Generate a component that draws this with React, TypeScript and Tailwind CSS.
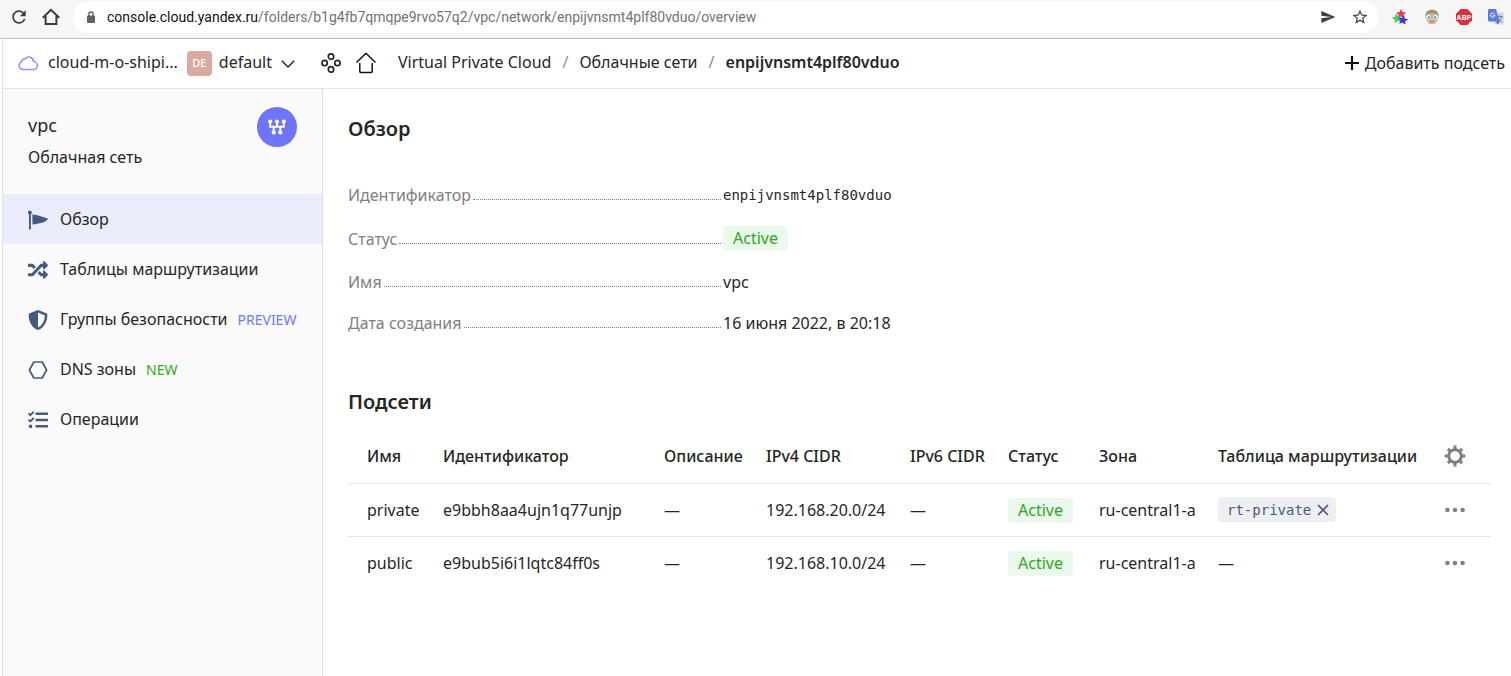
import type { ReactNode } from "react";
import { FaRandom, FaShieldAlt, FaTasks } from "react-icons/fa";
import { MdRefresh, MdSend, MdStarBorder } from "react-icons/md";

const PennantIcon = () => (
  <svg viewBox="0 0 20 20" className="size-5" fill="currentColor" aria-hidden="true">
    <circle cx="1.9" cy="2.4" r="1.9" />
    <rect x="1" y="2" width="1.9" height="17.5" />
    <path d="M4.4 4.6C10 4.6 14 7.6 20 8.4C17.6 13.4 11 12.9 4.4 14.6Z" />
  </svg>
);

const HexagonIcon = () => (
  <svg viewBox="0 0 20 20" className="size-5" fill="none" stroke="currentColor" strokeWidth="1.7" strokeLinejoin="round" aria-hidden="true">
    <path d="M5.8 2H14.2L18.6 10L14.2 18H5.8L1.4 10Z" />
  </svg>
);

const LockIcon = () => (
  <svg viewBox="0 0 10 13" className="h-[13px] w-2.5" fill="#5f6368" aria-hidden="true">
    <rect x="1" y="4.6" width="8" height="7.4" rx="1" />
    <path d="M2.8 5V3.2A2.2 2.2 0 0 1 7.2 3.2V5" fill="none" stroke="#5f6368" strokeWidth="1.3" />
  </svg>
);

const CloudIcon = () => (
  <svg viewBox="0 0 20 16" className="h-4 w-5 shrink-0" fill="none" stroke="#8f95fb" strokeWidth="1.5" aria-hidden="true">
    <path d="M5 14.4A4 4 0 0 1 3.4 6.8A4.1 4.1 0 0 1 7.2 3.8A4.6 4.6 0 0 1 15.4 6.6A3.9 3.9 0 0 1 15.6 14.4Z" transform="translate(0 -1)" />
  </svg>
);

const ServicesIcon = () => (
  <svg viewBox="0 0 20 20" className="size-5" fill="none" stroke="#222" strokeWidth="1.7" aria-hidden="true">
    <circle cx="10" cy="3.6" r="2.7" />
    <circle cx="3.6" cy="10" r="2.7" />
    <circle cx="16.4" cy="10" r="2.7" />
    <circle cx="10" cy="16.4" r="2.7" />
  </svg>
);

const HouseIcon = () => (
  <svg viewBox="0 0 20 22" className="h-[22px] w-5" fill="none" stroke="#111" strokeWidth="1.5" strokeLinejoin="round" strokeLinecap="round" aria-hidden="true">
    <path d="M1 10L10 1.2L19 10" />
    <path d="M3.8 11.6V19.6A1 1 0 0 0 4.8 20.6H15.2A1 1 0 0 0 16.2 19.6V11.6" />
  </svg>
);

const NetworkIcon = () => (
  <svg viewBox="0 0 18 16" className="h-4 w-[18px]" fill="none" stroke="#fff" strokeWidth="2" aria-hidden="true">
    <path d="M2.2 2.5V7.8H15.8V2.5M9 2.5V7.8M5.7 7.8V13.5M12.3 7.8V13.5" />
    <g fill="#fff" stroke="none">
      <circle cx="2.2" cy="2.6" r="2.1" />
      <circle cx="9" cy="2.6" r="2.1" />
      <circle cx="15.8" cy="2.6" r="2.1" />
      <circle cx="5.7" cy="13.4" r="2.1" />
      <circle cx="12.3" cy="13.4" r="2.1" />
    </g>
  </svg>
);

const GearIcon = () => (
  <svg viewBox="0 0 22 22" className="size-[22px]" fill="none" stroke="#808080" aria-hidden="true">
    <circle cx="11" cy="11" r="6.3" strokeWidth="3" />
    <g strokeWidth="3">
      <path d="M11 0.6V4.4M11 17.6V21.4M0.6 11H4.4M17.6 11H21.4" />
      <path d="M3.9 3.9L6.4 6.4M15.6 15.6L18.1 18.1M3.9 18.1L6.4 15.6M15.6 6.4L18.1 3.9" />
    </g>
  </svg>
);

const StarsIcon = () => {
  const star = "M0 -5L1.4 -1.8L4.8 -1.5L2.3 0.8L3 4.1L0 2.4L-3 4.1L-2.3 0.8L-4.8 -1.5L-1.4 -1.8Z";
  return (
    <svg viewBox="0 0 16 16" className="size-4" aria-hidden="true">
      <path d={star} transform="translate(9 5) scale(1.05)" fill="#ea3c50" />
      <path d={star} transform="translate(5 9.4) rotate(-12) scale(1.05)" fill="#3fcf5c" />
      <path d={star} transform="translate(11 11) rotate(10) scale(1.05)" fill="#4a2cf0" />
    </svg>
  );
};

const FaceIcon = () => (
  <svg viewBox="0 0 16 16" className="size-4" aria-hidden="true">
    <path d="M2.2 5H13.8L12.9 12.2C12 14.4 10.2 15.4 8 15.4S4 14.4 3.1 12.2Z" fill="#dfb594" />
    <path d="M1.2 7.4C1.2 2.8 4.2 0.8 8 0.8S14.8 2.8 14.8 7.4L12.6 4.8H3.4Z" fill="#ac8d68" />
    <circle cx="4.6" cy="8.1" r="2.7" fill="#eef7f8" stroke="#9fb3b6" strokeWidth="0.8" />
    <circle cx="11.4" cy="8.1" r="2.7" fill="#eef7f8" stroke="#9fb3b6" strokeWidth="0.8" />
    <circle cx="5" cy="8.2" r="1" fill="#4b7186" />
    <circle cx="11" cy="8.2" r="1" fill="#4b7186" />
    <path d="M6 12.8H10" stroke="#b06a58" strokeWidth="0.9" />
  </svg>
);

const AdblockIcon = () => (
  <svg viewBox="0 0 16 16" className="size-4" aria-hidden="true">
    <path d="M4.7 0H11.3L16 4.7V11.3L11.3 16H4.7L0 11.3V4.7Z" fill="#dc2f3e" />
    <text x="8" y="10.6" textAnchor="middle" fontSize="7" fontWeight="700" fill="#fff" fontFamily="Liberation Sans, sans-serif">ABP</text>
  </svg>
);

const TranslateIcon = () => (
  <svg viewBox="0 0 16 16" className="size-4" aria-hidden="true">
    <rect x="6" y="3.6" width="9.8" height="12" rx="1" fill="#d5d8dc" />
    <path d="M8.6 7.6H14.6M11.6 6.2V7.6M13.6 7.6C13 10.4 11.4 12 9.6 13M10.2 9.4C11 11 12.4 12.4 14 13" stroke="#6c7a89" strokeWidth="1" fill="none" />
    <path d="M1 0H8L11.6 12.4H1A1 1 0 0 1 0 11.4V1A1 1 0 0 1 1 0Z" fill="#5b7be8" />
    <path d="M8.4 12.4H11.6L9.4 15.4Z" fill="#3b50b4" />
    <path d="M6.3 4.6A2.2 2.2 0 1 0 6.9 6.3H4.9" stroke="#fff" strokeWidth="1" fill="none" />
  </svg>
);

function Status() {
  return (
    <span className="inline-block rounded bg-[#ebf8ec] px-2.5 align-middle leading-[25px] text-[#2fa61f]">Active</span>
  );
}

function BrowserBar() {
  return (
    <div className="flex h-[39px] items-start border-b border-[#bdbdbd] bg-[#f6f6f6] text-[#3c4043]">
      <div className="flex h-[33px] items-center pl-[9px]">
        <button aria-label="Reload"><MdRefresh className="size-5 text-[#3a3d40]" /></button>
        <button aria-label="Home" className="ml-3">
          <svg viewBox="0 0 20 20" className="size-5" fill="none" stroke="#3a3d40" strokeWidth="2" aria-hidden="true">
            <path d="M1.8 10.8L10 2.8L18.2 10.8M4.6 9V17H15.4V9" />
          </svg>
        </button>
      </div>
      <div className="mt-px ml-3 flex h-8 flex-1 items-center rounded-full bg-white pl-[13px]">
        <LockIcon />
        <p className="ml-[11px] flex-1 font-[Roboto,sans-serif] text-sm text-[#6f7377]">
          <span className="text-[#111]">console.cloud.yandex.ru</span>/folders/b1g4fb7qmqpe9rvo57q2/vpc/network/enpijvnsmt4plf80vduo/overview
        </p>
        <button aria-label="Send" className="mr-[15px]"><MdSend className="size-4 text-[#3c4043]" /></button>
        <button aria-label="Bookmark" className="mr-[9px]"><MdStarBorder className="size-[18px] text-[#3c4043]" /></button>
      </div>
      <div className="flex h-[33px] items-center gap-4 pr-[7px] pl-3.5">
        <StarsIcon />
        <FaceIcon />
        <AdblockIcon />
        <TranslateIcon />
      </div>
    </div>
  );
}

function Header() {
  return (
    <header className="flex h-[50px] items-center border-b border-[#e4e4e4] pr-1.5 pl-[15px]">
      <CloudIcon />
      <a href="#cloud" className="ml-2.5 pb-1">cloud-m-o-shipi...</a>
      <span className="ml-[9px] flex size-[25px] items-center justify-center rounded bg-[#dba99f] text-[11px] font-medium text-white">DE</span>
      <button className="ml-[7px] flex items-center">
        <span className="pb-1">default</span>
        <svg viewBox="0 0 14 8" className="ml-[9px] h-2 w-3.5" fill="none" stroke="#222" strokeWidth="1.4" aria-hidden="true">
          <path d="M0.8 0.8L7 7L13.2 0.8" />
        </svg>
      </button>
      <button aria-label="Services" className="ml-[26px] pb-0.5"><ServicesIcon /></button>
      <button aria-label="Home" className="ml-[15px] pb-0.5"><HouseIcon /></button>
      <nav className="ml-[22px] flex items-center pb-1">
        <a href="#vpc">Virtual Private Cloud</a>
        <span className="w-7 text-center text-[#8c8c8c]">/</span>
        <a href="#networks">Облачные сети</a>
        <span className="w-7 text-center text-[#8c8c8c]">/</span>
        <span className="font-semibold">enpijvnsmt4plf80vduo</span>
      </nav>
      <button className="ml-auto flex items-center gap-1.5 pb-0.5">
        <svg viewBox="0 0 14 14" className="size-3.5" stroke="#111" strokeWidth="2.2" aria-hidden="true">
          <path d="M7 0V14M0 7H14" />
        </svg>
        Добавить подсеть
      </button>
    </header>
  );
}

const menu: { label: string; icon: ReactNode; badge?: string; badgeClass?: string }[] = [
  { label: "Обзор", icon: <PennantIcon /> },
  { label: "Таблицы маршрутизации", icon: <FaRandom className="size-5" /> },
  { label: "Группы безопасности", icon: <FaShieldAlt className="size-5" />, badge: "PREVIEW", badgeClass: "text-[#7178ff]" },
  { label: "DNS зоны", icon: <HexagonIcon />, badge: "NEW", badgeClass: "text-[#2fa61f]" },
  { label: "Операции", icon: <FaTasks className="size-5" /> },
];

function Sidebar() {
  return (
    <aside className="w-80 shrink-0 border-r border-[#e0e0e0] bg-[#fafafa]">
      <div className="flex h-[105px] items-start justify-between pt-[18px] pr-[25px] pl-[25px]">
        <div>
          <p className="pt-1.5 text-lg leading-6">vpc</p>
          <p className="pt-2 leading-6">Облачная сеть</p>
        </div>
        <span className="flex size-10 items-center justify-center rounded-full bg-[#6e75fb]"><NetworkIcon /></span>
      </div>
      <nav>
        {menu.map((item, i) => (
          <a
            key={item.label}
            href="#section"
            className={`flex h-[50px] items-center pl-[25px] ${i === 0 ? "bg-[#eaecfa]" : ""}`}
          >
            <span className="mt-0.5 mr-3 text-[#455a80]">{item.icon}</span>
            {item.label}
            {item.badge && <span className={`ml-2.5 pt-0.5 text-sm ${item.badgeClass}`}>{item.badge}</span>}
          </a>
        ))}
      </nav>
    </aside>
  );
}

function Detail({ label, children }: { label: string; children: ReactNode }) {
  return (
    <div className="flex items-center leading-5">
      <dt className="flex w-[375px] shrink-0 text-[#808080]">
        {label}
        <span className="mx-0.5 mb-[5px] flex-1 border-b border-dotted border-[#808080]" />
      </dt>
      <dd>{children}</dd>
    </div>
  );
}

const columns = [
  { title: "Имя", width: "w-[83px]" },
  { title: "Идентификатор", width: "w-[221px]" },
  { title: "Описание", width: "w-[102px]" },
  { title: "IPv4 CIDR", width: "w-[144px]" },
  { title: "IPv6 CIDR", width: "w-[98px]" },
  { title: "Статус", width: "w-[91px]" },
  { title: "Зона", width: "w-[119px]" },
  { title: "Таблица маршрутизации", width: "w-[226px]" },
];

const subnets = [
  { name: "private", id: "e9bbh8aa4ujn1q77unjp", cidr: "192.168.20.0/24", zone: "ru-central1-a", route: "rt-private" },
  { name: "public", id: "e9bub5i6i1lqtc84ff0s", cidr: "192.168.10.0/24", zone: "ru-central1-a", route: "" },
];

function SubnetTable() {
  return (
    <table className="w-full table-fixed text-left whitespace-nowrap">
      <thead>
        <tr className="h-[53px] border-b border-[#e5e5e5]">
          {columns.map((c) => (
            <th key={c.title} className={`pl-3 font-medium first:pl-[19px] ${c.width}`}>{c.title}</th>
          ))}
          <th className="w-[59px] pl-3">
            <button aria-label="Настройки" className="block"><GearIcon /></button>
          </th>
        </tr>
      </thead>
      <tbody>
        {subnets.map((s) => (
          <tr key={s.id} className="h-[53px] border-b border-[#e5e5e5] last:border-b-0">
            <td className="pl-[19px]">{s.name}</td>
            <td className="pl-3">{s.id}</td>
            <td className="pl-3">—</td>
            <td className="pl-3">{s.cidr}</td>
            <td className="pl-3">—</td>
            <td className="pl-3"><Status /></td>
            <td className="pl-3">{s.zone}</td>
            <td className="pl-3">
              {s.route ? (
                <span className="inline-flex h-[25px] items-center rounded bg-[#eeeff3] px-[7px] font-['DejaVu_Sans_Mono',monospace] text-sm text-[#455a80]">
                  <span className="px-0.5">{s.route}</span>
                  <button aria-label="Отвязать" className="ml-1">
                    <svg viewBox="0 0 12 12" className="size-3" stroke="#455a80" strokeWidth="1.7" aria-hidden="true">
                      <path d="M1 1L11 11M11 1L1 11" />
                    </svg>
                  </button>
                </span>
              ) : "—"}
            </td>
            <td className="pl-[13px]">
              <button aria-label="Действия" className="block">
                <svg viewBox="0 0 20 6" className="h-1.5 w-5" fill="#808080" aria-hidden="true">
                  <circle cx="2.4" cy="3" r="2.3" />
                  <circle cx="10" cy="3" r="2.3" />
                  <circle cx="17.6" cy="3" r="2.3" />
                </svg>
              </button>
            </td>
          </tr>
        ))}
      </tbody>
    </table>
  );
}

export default function App() {
  return (
    <div className="flex min-h-screen flex-col bg-white font-['Noto_Sans',sans-serif] text-base text-[#262626]">
      <BrowserBar />
      <div className="ml-0.5 flex flex-1 flex-col border-l border-[#e0e0e0]">
        <Header />
        <div className="flex flex-1">
          <Sidebar />
          <main className="min-w-0 flex-1 pt-[26px] pr-5 pl-[25px]">
            <h1 className="text-xl leading-7 font-semibold">Обзор</h1>
            <dl className="mt-[41px] flex flex-col gap-[21px]">
              <Detail label="Идентификатор">
                <span className="font-['DejaVu_Sans_Mono',monospace] text-sm">enpijvnsmt4plf80vduo</span>
              </Detail>
              <Detail label="Статус"><Status /></Detail>
              <Detail label="Имя">vpc</Detail>
              <Detail label="Дата создания">16 июня 2022, в 20:18</Detail>
            </dl>
            <h2 className="mt-[55px] mb-3.5 text-xl leading-7 font-semibold">Подсети</h2>
            <SubnetTable />
          </main>
        </div>
      </div>
    </div>
  );
}
